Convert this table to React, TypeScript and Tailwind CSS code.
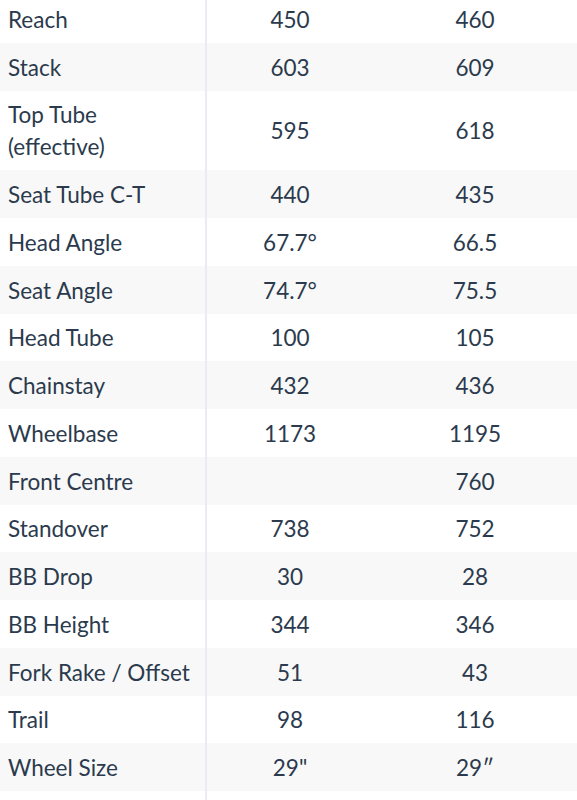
import React from "react";

const rows: [string, string, string][] = [
  ["Reach", "450", "460"],
  ["Stack", "603", "609"],
  ["Top Tube\n(effective)", "595", "618"],
  ["Seat Tube C-T", "440", "435"],
  ["Head Angle", "67.7°", "66.5"],
  ["Seat Angle", "74.7°", "75.5"],
  ["Head Tube", "100", "105"],
  ["Chainstay", "432", "436"],
  ["Wheelbase", "1173", "1195"],
  ["Front Centre", "", "760"],
  ["Standover", "738", "752"],
  ["BB Drop", "30", "28"],
  ["BB Height", "344", "346"],
  ["Fork Rake / Offset", "51", "43"],
  ["Trail", "98", "116"],
  ["Wheel Size", "29\"", "29″"],
];

export default function App() {
  return (
    <div
      className="w-[577px] h-[800px] overflow-hidden bg-white text-[#2b3a4d] text-[22.5px] font-normal leading-[32px]"
      style={{ fontFamily: "Lato, 'Open Sans', sans-serif" }}
    >
      <div className="-mt-[5px] flex flex-col">
        {rows.map(([label, a, b], i) => (
          <div
            key={label}
            className={`grid grid-cols-[207px_166px_1fr] ${i % 2 === 1 ? "bg-[#f8f8f8]" : "bg-white"}`}
          >
            <div className="border-r-2 border-[#e9ecf0] px-2 pt-[8.88px] pb-[6.88px] whitespace-pre-line">
              {label}
            </div>
            <div className="flex items-center justify-center pt-[8.88px] pb-[6.88px]">{a}</div>
            <div className="flex items-center justify-center pt-[8.88px] pb-[6.88px]">{b}</div>
          </div>
        ))}
        <div className="grid grid-cols-[207px_166px_1fr] h-[40px] bg-white">
          <div className="border-r-2 border-[#e9ecf0]" />
          <div />
          <div />
        </div>
      </div>
    </div>
  );
}
